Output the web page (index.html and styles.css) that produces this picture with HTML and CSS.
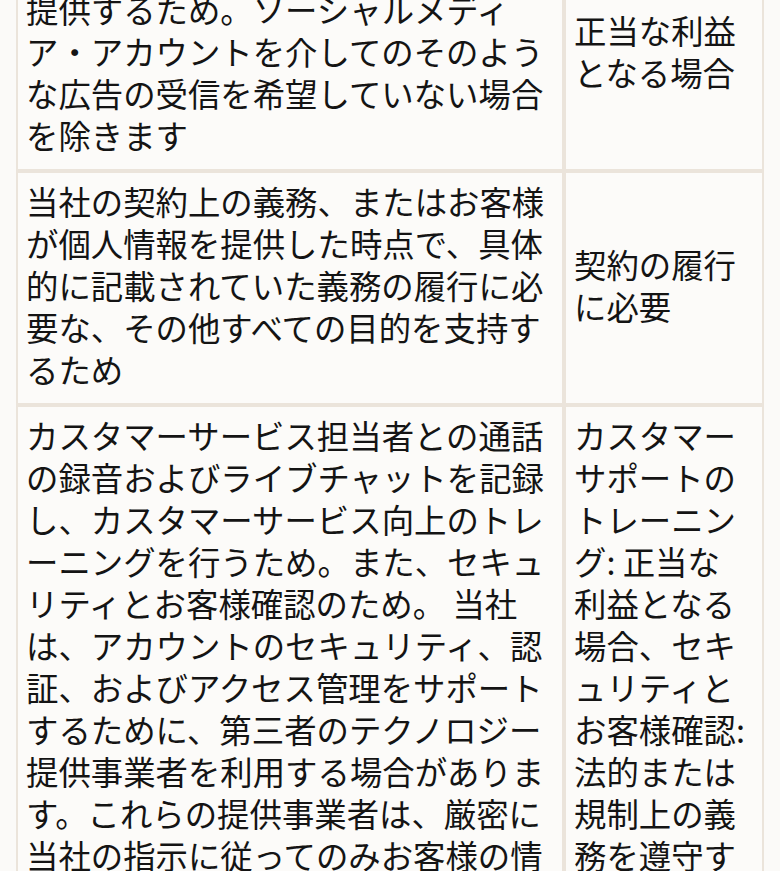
FILE: index.html
```html
<!DOCTYPE html>
<html lang="ja">
<head>
<meta charset="utf-8">
<title>個人情報の利用目的</title>
<link rel="stylesheet" href="styles.css">
</head>
<body>
<table class="purposes">
  <colgroup>
    <col class="col-purpose">
    <col class="col-basis">
  </colgroup>
  <tbody>
    <tr>
      <td>お客様にカスタマイズされた広告を提供するため。ソーシャルメディア・アカウントを介してのそのような広告の受信を希望していない場合を除きます</td>
      <td>正当な利益となる場合</td>
    </tr>
    <tr>
      <td>当社の契約上の義務、またはお客様が個人情報を提供した時点で、具体的に記載されていた義務の履行に必要な、その他すべての目的を支持するため</td>
      <td>契約の履行に必要</td>
    </tr>
    <tr>
      <td>カスタマーサービス担当者との通話の録音およびライブチャットを記録し、カスタマーサービス向上のトレーニングを行うため。また、セキュリティとお客様確認のため。 当社は、アカウントのセキュリティ、認証、およびアクセス管理をサポートするために、第三者のテクノロジー提供事業者を利用する場合があります。これらの提供事業者は、厳密に当社の指示に従ってのみお客様の情報を処理します。</td>
      <td>カスタマーサポートのトレーニング: 正当な利益となる場合、セキュリティとお客様確認: 法的または規制上の義務を遵守する場合</td>
    </tr>
  </tbody>
</table>
</body>
</html>
```

FILE: styles.css
```css
html, body {
  margin: 0;
  padding: 0;
  overflow: hidden;
  background: #fbfaf8;
}

body {
  font-family: "Noto Sans CJK JP", "Noto Sans", sans-serif;
  color: #141414;
}

.purposes {
  margin: -63px 0 0 16px;
  width: 748px;
  table-layout: fixed;
  border-collapse: separate;
  border-spacing: 0;
}

.col-purpose {
  width: 548px;
}

.col-basis {
  width: 200px;
}

.purposes td {
  border: 2px solid #ebe4db;
  padding: 7px 12px 13px 8px;
  font-size: 32.4px;
  line-height: 42px;
  vertical-align: middle;
  background: #fcfbf9;
  word-break: normal;
}
```
